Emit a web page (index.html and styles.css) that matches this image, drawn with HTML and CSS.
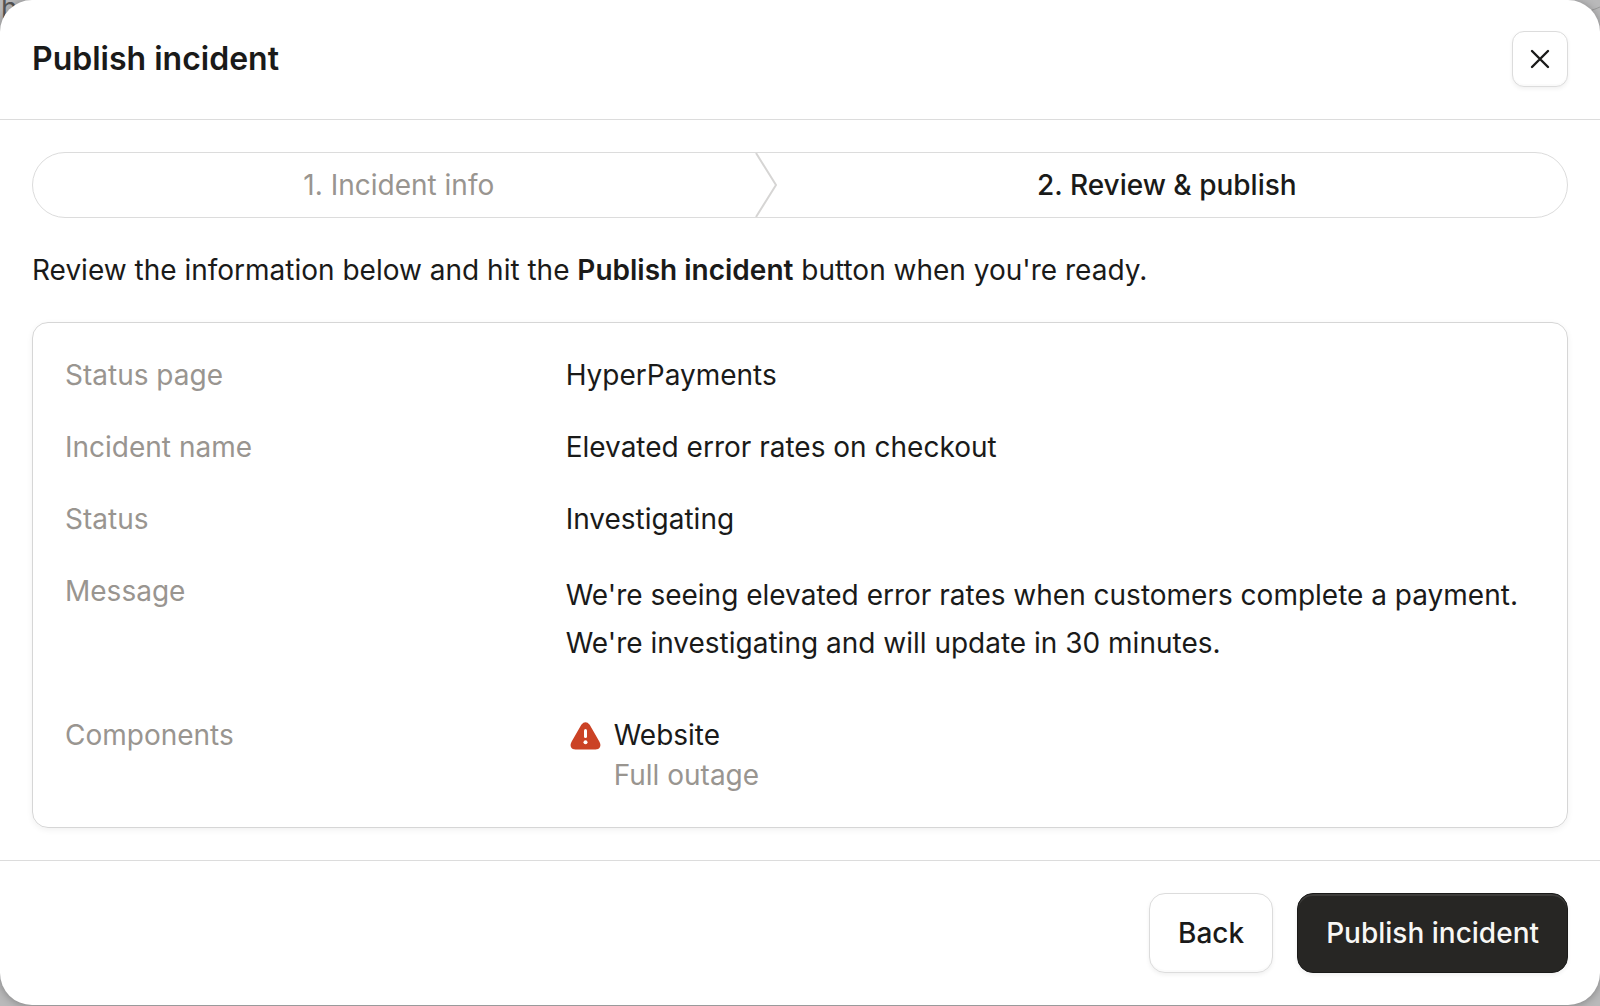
FILE: index.html
```html
<!DOCTYPE html>
<html lang="en">
<head>
  <meta charset="UTF-8">
  <meta name="viewport" content="width=device-width, initial-scale=1.0">
  <title>Publish incident</title>
  <link rel="stylesheet" href="styles.css">
</head>
<body>
  <div class="backdrop-text" aria-hidden="true">h</div>
  <svg class="backdrop-line" viewBox="0 0 40 40" aria-hidden="true"><path d="M10 14Q30 12 40 7"/></svg>

  <div class="modal" role="dialog" aria-labelledby="modal-title">
    <header class="modal-header">
      <h1 id="modal-title">Publish incident</h1>
      <button type="button" class="btn btn-close" aria-label="Close">
        <svg viewBox="0 0 20 20"><path d="M2 2l16 16M18 2L2 18"/></svg>
      </button>
    </header>

    <main class="modal-body">
      <ol class="steps">
        <li class="step">1. Incident info</li>
        <li class="step-divider" aria-hidden="true">
          <svg viewBox="0 0 22 64"><path d="M1 0l20 32L1 64"/></svg>
        </li>
        <li class="step active" aria-current="step">2. Review &amp; publish</li>
      </ol>

      <p class="intro">Review the information below and hit the <strong>Publish incident</strong> button when you're ready.</p>

      <dl class="summary">
        <dt>Status page</dt>
        <dd>HyperPayments</dd>

        <dt>Incident name</dt>
        <dd>Elevated error rates on checkout</dd>

        <dt>Status</dt>
        <dd>Investigating</dd>

        <dt>Message</dt>
        <dd class="message">We're seeing elevated error rates when customers complete a payment. We're investigating and will update in 30 minutes.</dd>

        <dt>Components</dt>
        <dd class="component">
          <svg class="icon-alert" viewBox="0 0 40 40" aria-hidden="true">
            <path class="shape" d="M15.300 9.700Q19.500 4.800 23.700 9.700L33.300 26.500C36 31 33.500 34.500 29.500 34.500H9.500C5.500 34.500 3 31 5.700 26.500Z"/>
            <path class="mark" d="M19.500 15.500v6"/>
            <circle class="dot" cx="19.500" cy="27.300" r="2"/>
          </svg>
          <div>
            <div>Website</div>
            <div class="muted">Full outage</div>
          </div>
        </dd>
      </dl>
    </main>

    <footer class="modal-footer">
      <button type="button" class="btn">Back</button>
      <button type="button" class="btn btn-primary">Publish incident</button>
    </footer>
  </div>
</body>
</html>
```
FILE: styles.css
```css
:root {
  --text: #1a1a19;
  --muted: #999590;
  --border: #dcdcdc;
  --dark: #272624;
  --danger: #cb4225;
}

* {
  box-sizing: border-box;
}

body {
  margin: 0;
  background-color: #b9b9ba;
  color: var(--text);
  font-family: Inter, sans-serif;
  font-size: 28px;
  line-height: 40px;
}

/* page content showing behind the modal corners */
.backdrop-text {
  position: absolute;
  top: -12px;
  left: 1px;
  color: #555;
}

.backdrop-line {
  position: absolute;
  top: 0;
  right: 0;
  width: 40px;
  height: 40px;
  fill: none;
  stroke: #999;
}

.modal {
  position: relative;
  margin-bottom: 1px;
  background-color: #fff;
  border-radius: 32px;
  box-shadow: 0 1px 8px rgba(0, 0, 0, 0.3);
}

.modal-header {
  display: flex;
  align-items: center;
  justify-content: space-between;
  padding: 31px 32px 32px;
  border-bottom: 1px solid var(--border);
}

.modal-header h1 {
  margin: 0;
  font-size: 32px;
  font-weight: 600;
}

.btn {
  height: 80px;
  padding: 0 28px;
  background-color: #fff;
  color: var(--text);
  border: 1px solid var(--border);
  border-radius: 16px;
  box-shadow: 0 2px 4px rgba(0, 0, 0, 0.06), inset 0 -2px 1px rgba(0, 0, 0, 0.02);
  font: inherit;
  font-weight: 500;
  cursor: pointer;
}

.btn-close {
  display: flex;
  align-items: center;
  justify-content: center;
  width: 56px;
  height: 56px;
  padding: 0;
  border-radius: 12px;
}

.btn-close svg {
  width: 20px;
  height: 20px;
  fill: none;
  stroke: var(--text);
  stroke-width: 2.4;
  stroke-linecap: round;
}

.btn-primary {
  background-color: var(--dark);
  color: #f8f7f5;
  border-color: #1a1a19;
  box-shadow: 0 2px 4px rgba(0, 0, 0, 0.06), inset 0 2px 0 #3d3c3a;
}

.modal-body {
  padding: 32px;
}

.steps {
  display: flex;
  margin: 0;
  padding: 0 10px;
  list-style: none;
  border: 1px solid var(--border);
  border-radius: 33px;
}

.step {
  flex: 1 1 auto;
  padding: 12px 0;
  text-align: center;
  color: var(--muted);
}

.step.active {
  color: var(--text);
  font-weight: 500;
}

.step-divider svg {
  display: block;
  width: 22px;
  height: 64px;
  fill: none;
  stroke: #d6d5d4;
  stroke-width: 2;
}

.intro {
  margin: 32px 0;
}

.intro strong {
  font-weight: 600;
}

.summary {
  display: grid;
  grid-template-columns: repeat(3, 1fr);
  gap: 32px;
  margin: 0;
  padding: 32px;
  border: 1px solid #d6d6d6;
  border-radius: 16px;
  box-shadow: 0 2px 6px rgba(0, 0, 0, 0.06);
}

.summary dt,
.muted {
  color: var(--muted);
}

.summary dd {
  grid-column: span 2;
  margin: 0;
}

.summary .message {
  padding-bottom: 16px;
  line-height: 48px;
}

.component {
  display: flex;
  gap: 8px;
}

.icon-alert {
  width: 40px;
  height: 40px;
}

.icon-alert .shape {
  fill: var(--danger);
}

.icon-alert .mark {
  stroke: #fff;
  stroke-width: 3;
  stroke-linecap: round;
}

.icon-alert .dot {
  fill: #fff;
}

.modal-footer {
  display: flex;
  justify-content: flex-end;
  gap: 24px;
  padding: 32px;
  border-top: 1px solid var(--border);
}
```
